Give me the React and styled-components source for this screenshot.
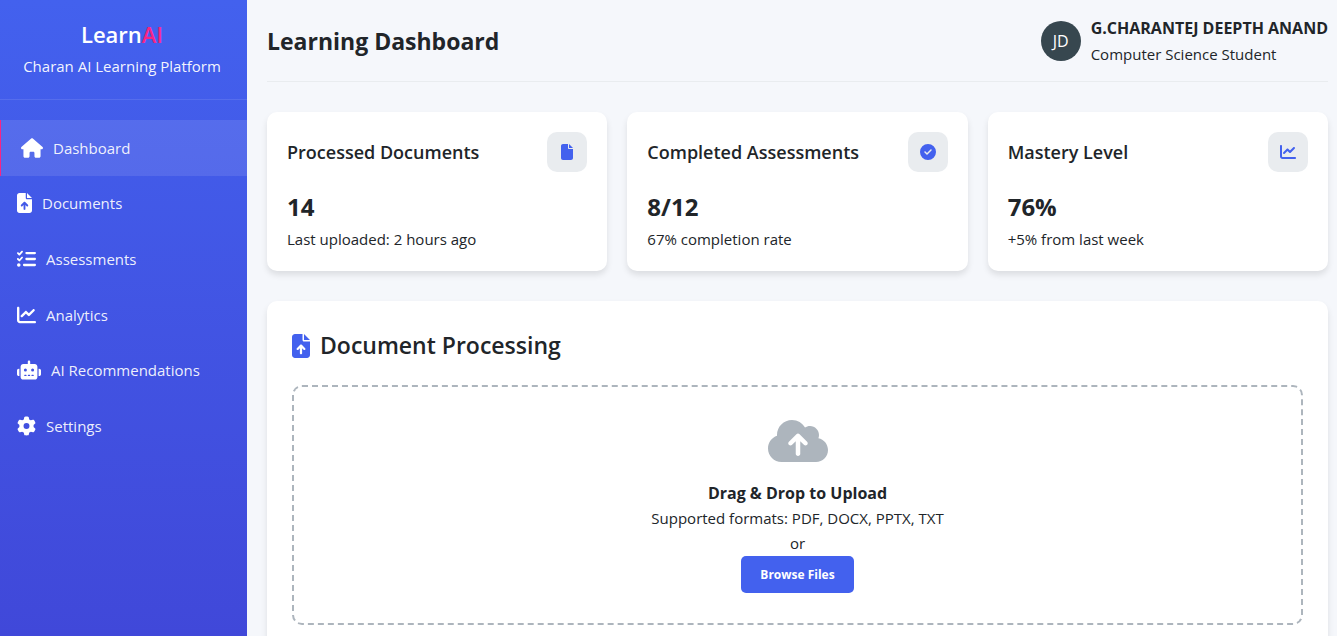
import React from "react";
import styled, { createGlobalStyle } from "styled-components";
import {
  FaHouse,
  FaFileArrowUp,
  FaListCheck,
  FaChartLine,
  FaRobot,
  FaGear,
  FaFile,
  FaCircleCheck,
  FaCloudArrowUp,
} from "react-icons/fa6";

const GlobalStyle = createGlobalStyle`
  *, *::before, *::after {
    box-sizing: border-box;
    margin: 0;
    padding: 0;
  }
  body {
    background: #f5f7fb;
    color: #212529;
    font-family: "Segoe UI", "Open Sans", "Noto Sans", sans-serif;
    font-size: 15px;
    line-height: 26px;
  }
`;

const Layout = styled.div`
  display: grid;
  grid-template-columns: 247px minmax(0, 1fr);
  height: 100vh;
`;

const Sidebar = styled.aside`
  background: linear-gradient(180deg, #4361ee 0%, #4048d9 100%);
  color: #fff;
  overflow: hidden;
`;

const Brand = styled.div`
  padding: 16px 23px 20px 20px;
  border-bottom: 1px solid rgba(255, 255, 255, 0.1);
  margin-bottom: 20px;
  text-align: center;
  white-space: nowrap;
  display: flex;
  flex-direction: column;
  align-items: center;
`;

const BrandName = styled.h1`
  font-size: 22px;
  font-weight: 600;
  line-height: 37px;

  span {
    color: #f72585;
  }
`;

const Tagline = styled.p`
  color: rgba(255, 255, 255, 0.95);
`;

const Nav = styled.nav`
  display: grid;
  grid-auto-rows: 1fr;
  height: 334px;
`;

const NavLink = styled.a`
  display: flex;
  align-items: center;
  gap: 10px;
  padding: 0 17px;
  padding-left: ${({ $active }) => ($active ? "20px" : "17px")};
  border-left: ${({ $active }) => ($active ? "1px solid #f72585" : "none")};
  background: ${({ $active }) => ($active ? "rgba(255, 255, 255, 0.1)" : "transparent")};
  color: rgba(255, 255, 255, 0.92);
  text-decoration: none;
`;

const Glyph = styled.span`
  display: flex;
  flex: none;
  color: ${({ $color }) => $color || "inherit"};

  svg {
    width: ${({ $width }) => $width}px;
    height: ${({ $height }) => $height}px;
  }
`;

const Main = styled.main`
  padding: 0 9px 30px 20px;
  overflow-y: auto;
  scrollbar-width: none;
`;

const Header = styled.header`
  display: flex;
  justify-content: space-between;
  align-items: center;
  padding: 15px 0 14px;
  border-bottom: 1px solid #e9ecef;
  margin-bottom: 30px;
`;

const PageTitle = styled.h2`
  font-size: 23px;
  font-weight: 700;
  line-height: 38px;
`;

const User = styled.div`
  display: flex;
  align-items: center;
  gap: 10px;
`;

const Avatar = styled.div`
  display: grid;
  place-items: center;
  width: 40px;
  height: 40px;
  border-radius: 50%;
  background: #37474f;
  color: #fff;
  font-size: 16px;
`;

const Strong = styled.p`
  font-size: 16px;
  font-weight: 700;
`;

const Stats = styled.section`
  display: grid;
  grid-template-columns: repeat(3, minmax(0, 1fr));
  gap: 20px;
  margin-bottom: 30px;
`;

const Card = styled.article`
  background: #fff;
  border-radius: 10px;
  padding: 20px 20px 19px;
  box-shadow: 0 4px 6px rgba(0, 0, 0, 0.1);
`;

const CardHead = styled.div`
  display: flex;
  justify-content: space-between;
  align-items: center;
  margin-bottom: 16px;
`;

const CardTitle = styled.h3`
  font-size: 18px;
  font-weight: 600;
`;

const IconBox = styled.div`
  display: grid;
  place-items: center;
  width: 40px;
  height: 40px;
  border-radius: 10px;
  background: #e9ecef;
  color: #4361ee;
`;

const Value = styled.p`
  font-size: 24px;
  font-weight: 700;
  line-height: 38px;
`;

const Panel = styled.section`
  background: #fff;
  border-radius: 10px;
  padding: 25px;
  box-shadow: 0 4px 6px rgba(0, 0, 0, 0.1);
`;

const PanelTitle = styled.h2`
  display: flex;
  align-items: center;
  gap: 10px;
  margin-bottom: 20px;
  font-size: 23px;
  font-weight: 600;
  line-height: 39px;
`;

const DropZone = styled.div`
  display: flex;
  flex-direction: column;
  align-items: center;
  padding: 30px;
  border: 2px dashed #adb5bd;
  border-radius: 10px;
  line-height: 25px;
  text-align: center;

  > :first-child {
    margin-bottom: 16px;
  }
`;

const Button = styled.button`
  padding: 10px 19px;
  border: 0;
  border-radius: 5px;
  background: #4361ee;
  color: #fff;
  font-family: inherit;
  font-size: 12px;
  font-weight: 700;
  line-height: 17px;
  cursor: pointer;
`;

const links = [
  { label: "Dashboard", icon: FaHouse, width: 22, active: true },
  { label: "Documents", icon: FaFileArrowUp, width: 15 },
  { label: "Assessments", icon: FaListCheck, width: 19 },
  { label: "Analytics", icon: FaChartLine, width: 19 },
  { label: "AI Recommendations", icon: FaRobot, width: 24 },
  { label: "Settings", icon: FaGear, width: 19 },
];

const stats = [
  { title: "Processed Documents", value: "14", note: "Last uploaded: 2 hours ago", icon: FaFile, width: 12 },
  { title: "Completed Assessments", value: "8/12", note: "67% completion rate", icon: FaCircleCheck, width: 16 },
  { title: "Mastery Level", value: "76%", note: "+5% from last week", icon: FaChartLine, width: 16 },
];

export default function App() {
  return (
    <>
      <GlobalStyle />
      <Layout>
        <Sidebar>
          <Brand>
            <BrandName>
              Learn<span>AI</span>
            </BrandName>
            <Tagline>Charan AI Learning Platform</Tagline>
          </Brand>
          <Nav>
            {links.map(({ label, icon: Icon, width, active }) => (
              <NavLink key={label} href="#" $active={active} aria-current={active ? "page" : undefined}>
                <Glyph $width={width} $height={20} $color="#fff">
                  <Icon aria-hidden="true" />
                </Glyph>
                {label}
              </NavLink>
            ))}
          </Nav>
        </Sidebar>
        <Main>
          <Header>
            <PageTitle>Learning Dashboard</PageTitle>
            <User>
              <Avatar>JD</Avatar>
              <div>
                <Strong>G.CHARANTEJ DEEPTH ANAND</Strong>
                <p>Computer Science Student</p>
              </div>
            </User>
          </Header>
          <Stats>
            {stats.map(({ title, value, note, icon: Icon, width }) => (
              <Card key={title}>
                <CardHead>
                  <CardTitle>{title}</CardTitle>
                  <IconBox>
                    <Glyph $width={width} $height={16}>
                      <Icon aria-hidden="true" />
                    </Glyph>
                  </IconBox>
                </CardHead>
                <Value>{value}</Value>
                <p>{note}</p>
              </Card>
            ))}
          </Stats>
          <Panel>
            <PanelTitle>
              <Glyph $width={18} $height={24} $color="#4361ee">
                <FaFileArrowUp aria-hidden="true" />
              </Glyph>
              Document Processing
            </PanelTitle>
            <DropZone>
              <Glyph $width={60} $height={48} $color="#adb5bd">
                <FaCloudArrowUp aria-hidden="true" />
              </Glyph>
              <Strong>Drag &amp; Drop to Upload</Strong>
              <p>Supported formats: PDF, DOCX, PPTX, TXT</p>
              <p>or</p>
              <Button type="button">Browse Files</Button>
            </DropZone>
          </Panel>
        </Main>
      </Layout>
    </>
  );
}
